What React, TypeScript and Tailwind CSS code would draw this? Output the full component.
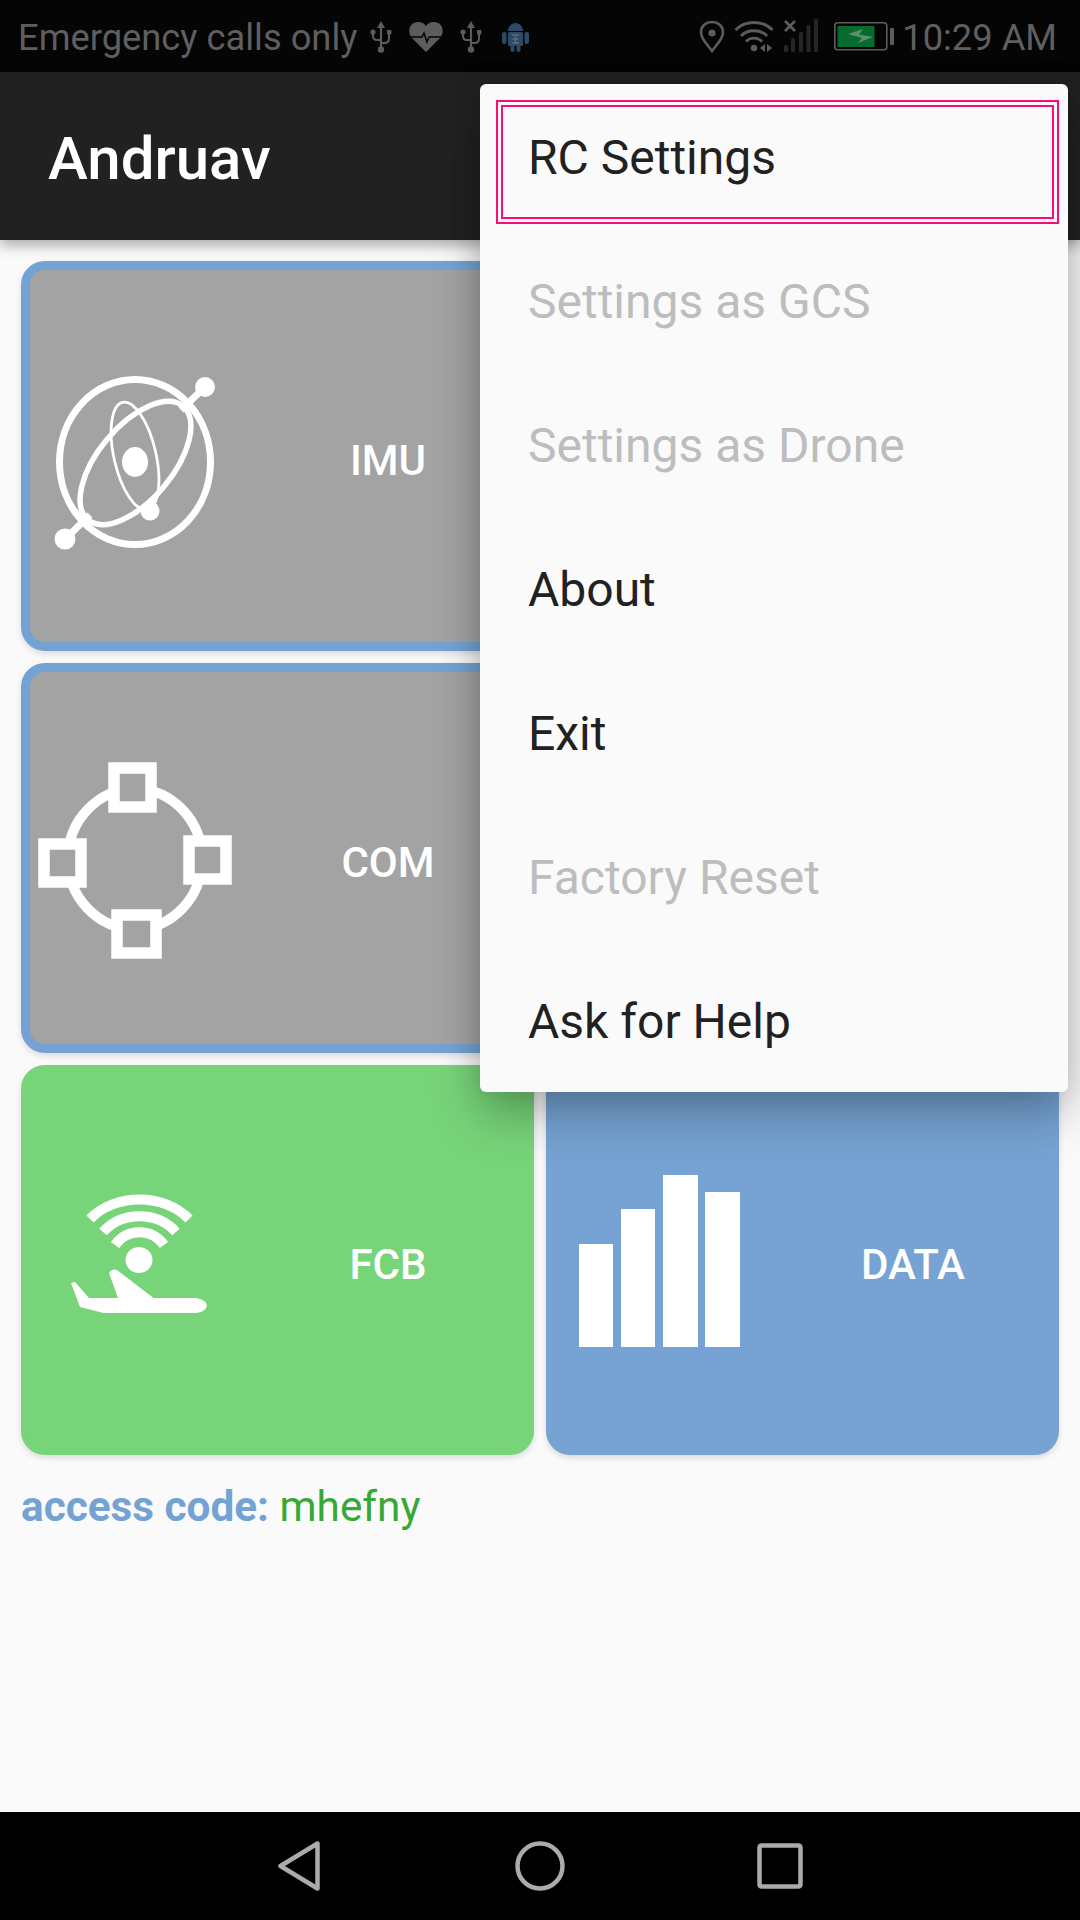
import React from "react";

const Usb = () => (
  <svg width="22" height="33" viewBox="0 0 22 33" fill="none" className="shrink-0">
    <path d="M11 1 L15 8 H7 Z" fill="#5c5c5c" />
    <path d="M11 6 V28" stroke="#5c5c5c" strokeWidth="2.2" />
    <circle cx="11" cy="29.5" r="3.2" fill="#5c5c5c" />
    <path d="M3 13 V16 Q3 20 7 20 H11" stroke="#5c5c5c" strokeWidth="2" />
    <path d="M19 13 V18 Q19 23 15 23 H11" stroke="#5c5c5c" strokeWidth="2" />
    <circle cx="3" cy="12" r="2.6" fill="#5c5c5c" />
    <rect x="17" y="10" width="4.4" height="4.4" fill="#5c5c5c" />
  </svg>
);

const Heart = () => (
  <svg width="34" height="31" viewBox="0 0 34 31" className="shrink-0">
    <path d="M17 31 L3 17 C-2 11 0 2 8 1 C12 .5 15 2 17 5 C19 2 22 .5 26 1 C34 2 36 11 31 17 Z" fill="#5c5c5c" />
    <path d="M2 16 H13 L15 12 L18 21 L20 16 H32" stroke="#050505" strokeWidth="1.6" fill="none" />
  </svg>
);

const Android = () => (
  <svg width="27" height="31" viewBox="0 0 27 31" className="shrink-0">
    <path d="M6 10 C6 5 10 2 13.5 2 C17 2 21 5 21 10 Z" fill="#2c4a68" />
    <rect x="6" y="11" width="15" height="14" rx="1.5" fill="#2c4a68" />
    <rect x="0" y="11" width="4.5" height="12" rx="2.2" fill="#2c4a68" />
    <rect x="22.5" y="11" width="4.5" height="12" rx="2.2" fill="#2c4a68" />
    <rect x="8.5" y="24" width="4" height="7" rx="2" fill="#2c4a68" />
    <rect x="14.5" y="24" width="4" height="7" rx="2" fill="#2c4a68" />
    <path d="M10 14 H17 M13.5 14 V22 M10.5 18 H16.5 M10 22 H17" stroke="#5d6b78" strokeWidth="1.4" />
  </svg>
);

const Pin = () => (
  <svg width="26" height="33" viewBox="0 0 26 33" fill="none" className="shrink-0">
    <path d="M13 31 C8 24 2 19 2 12.5 C2 6 7 2 13 2 C19 2 24 6 24 12.5 C24 19 18 24 13 31 Z" stroke="#5c5c5c" strokeWidth="2.6" />
    <circle cx="13" cy="13" r="3.6" fill="#5c5c5c" />
  </svg>
);

const Wifi = () => (
  <svg width="40" height="32" viewBox="0 0 40 32" fill="none" className="shrink-0">
    <path d="M1.5 10 C11 0 29 0 38.5 10" stroke="#5c5c5c" strokeWidth="2.8" />
    <path d="M7 16 C13 9 27 9 33 16" stroke="#5c5c5c" strokeWidth="2.8" />
    <path d="M12 21.5 C16 17 24 17 28 21.5" stroke="#5c5c5c" strokeWidth="2.8" />
    <circle cx="20" cy="28" r="3.2" fill="#5c5c5c" />
    <path d="M31 24 V32 L26 28 Z M33 24 V32 L38 28 Z" fill="#5c5c5c" />
  </svg>
);

const Signal = () => (
  <svg width="34" height="34" viewBox="0 0 34 34" className="shrink-0">
    <path d="M1 2 L11 12 M11 2 L1 12" stroke="#5c5c5c" strokeWidth="2.8" />
    <rect x="0" y="26" width="4" height="7" rx="1.5" fill="#262626" />
    <rect x="7" y="19" width="4" height="14" rx="1.5" fill="#262626" />
    <rect x="15" y="13" width="4" height="20" rx="1.5" fill="#262626" />
    <rect x="22.5" y="6" width="4" height="27" rx="1.5" fill="#262626" />
    <rect x="30" y="0" width="4" height="33" rx="1.5" fill="#262626" />
  </svg>
);

const Battery = () => (
  <svg width="60" height="29" viewBox="0 0 60 29" fill="none" className="shrink-0">
    <rect x=".8" y=".8" width="52" height="27" rx="3" stroke="#5c5c5c" strokeWidth="1.6" />
    <rect x="3.5" y="4" width="37" height="21" fill="#056b2e" />
    <path d="M14 12 L29 7 L25 12.5 L39 15 L24 21 L28 16 Z" fill="#5f8e6b" />
    <rect x="56" y="6" width="4" height="17" rx="1" fill="#5c5c5c" />
  </svg>
);

const ImuIcon = () => (
  <svg viewBox="0 0 221 372" width="221" height="372" fill="none" className="shrink-0 blur-[0.7px]">
    <ellipse cx="105" cy="192" rx="75.5" ry="82.5" stroke="white" strokeWidth="7" />
    <path d="M175 117 L151 140 M35 269 L60 245" stroke="white" strokeWidth="7" />
    <circle cx="175" cy="117" r="10" fill="white" />
    <circle cx="35" cy="269" r="10.5" fill="white" />
    <ellipse cx="105.5" cy="193" rx="74" ry="37" transform="rotate(-50 105.5 193)" stroke="white" strokeWidth="5.5" />
    <ellipse cx="105" cy="186" rx="21" ry="55" transform="rotate(-13 105 186)" stroke="white" strokeWidth="2.8" />
    <ellipse cx="105" cy="192" rx="13" ry="15" fill="white" />
    <circle cx="120" cy="241" r="9.5" fill="white" />
  </svg>
);

const ComIcon = () => (
  <svg viewBox="0 0 221 372" width="221" height="372" fill="none" className="shrink-0 blur-[0.7px]">
    <ellipse cx="105" cy="187" rx="67" ry="70" stroke="white" strokeWidth="10" />
    <rect x="84" y="96" width="37" height="39" fill="#a3a3a3" stroke="white" strokeWidth="11.5" />
    <rect x="14" y="172" width="37" height="38" fill="#a3a3a3" stroke="white" strokeWidth="11.5" />
    <rect x="159" y="169" width="37" height="38" fill="#a3a3a3" stroke="white" strokeWidth="11.5" />
    <rect x="87" y="243" width="39" height="38" fill="#a3a3a3" stroke="white" strokeWidth="11.5" />
  </svg>
);

const FcbIcon = () => (
  <svg viewBox="0 0 221 372" width="221" height="372" fill="none" className="shrink-0 blur-[0.7px]">
    <path d="M60 145 C85 119 134 119 159 145" stroke="white" strokeWidth="10" />
    <path d="M73 158 C92 137 127 137 146 158" stroke="white" strokeWidth="10" />
    <path d="M85 171 C97 154 122 154 134 171" stroke="white" strokeWidth="10" />
    <ellipse cx="109" cy="186" rx="13.5" ry="13" fill="white" />
    <path d="M41 209 L45 208 L59 224 L88 224 L79 199 Q82 194 87 196 L123.5 224 L166 224 Q177 226 177 232 Q175 238 166 239 L73.5 239 L50 233 Z" fill="white" />
  </svg>
);

const DataIcon = () => (
  <svg viewBox="0 0 221 372" width="221" height="372" className="shrink-0 blur-[0.7px]">
    <rect x="24" y="170" width="34" height="103" fill="white" />
    <rect x="66" y="135" width="34" height="138" fill="white" />
    <rect x="108" y="101" width="35" height="172" fill="white" />
    <rect x="150" y="118" width="35" height="155" fill="white" />
  </svg>
);

const Card = ({ bg, border, icon, label }: { bg: string; border: string; icon?: React.ReactNode; label?: string }) => (
  <div className={`h-[390px] rounded-[24px] border-[9px] flex items-center shadow-[0_3px_6px_rgba(0,0,0,0.12)] ${bg} ${border}`}>
    {icon}
    {label && <div className="flex-1 text-center text-[42px] font-medium leading-[49px] text-white mt-[8px]">{label}</div>}
  </div>
);

const items = [
  { t: "RC Settings", on: true },
  { t: "Settings as GCS", on: false },
  { t: "Settings as Drone", on: false },
  { t: "About", on: true },
  { t: "Exit", on: true },
  { t: "Factory Reset", on: false },
  { t: "Ask for Help", on: true },
];

export default function App() {
  return (
    <div className="relative w-[1080px] h-[1920px] flex flex-col overflow-hidden bg-[#fafafa] font-[Roboto,sans-serif]">
      <div className="h-[72px] shrink-0 bg-[#050505] flex items-center pl-[18px] pr-[23px] text-[36.3px] text-[#5f5f5f]">
        <span className="pt-[4px]">Emergency calls only</span>
        <div className="flex items-center ml-[13px]">
          <Usb />
          <div className="ml-[17px]"><Heart /></div>
          <div className="ml-[17px]"><Usb /></div>
          <div className="ml-[20px]"><Android /></div>
        </div>
        <div className="flex items-center ml-auto">
          <Pin />
          <div className="ml-[9px]"><Wifi /></div>
          <div className="ml-[10px]"><Signal /></div>
          <div className="ml-[16px]"><Battery /></div>
          <span className="ml-[8px] pt-[4px]">10:29 AM</span>
        </div>
      </div>

      <div className="relative z-10 h-[168px] shrink-0 bg-[#212121] flex items-center pl-[48px] pt-[5px] shadow-[0_6px_12px_rgba(0,0,0,0.3)]">
        <span className="text-[60px] font-medium text-white">Andruav</span>
      </div>

      <div className="flex-1 px-[21px] pt-[21px]">
        <div className="grid grid-cols-2 gap-x-[12px] gap-y-[12px]">
          <Card bg="bg-[#a3a3a3]" border="border-[#74a3d3]" icon={<ImuIcon />} label="IMU" />
          <Card bg="bg-[#a3a3a3]" border="border-[#74a3d3]" />
          <Card bg="bg-[#a3a3a3]" border="border-[#74a3d3]" icon={<ComIcon />} label="COM" />
          <Card bg="bg-[#a3a3a3]" border="border-[#74a3d3]" />
          <Card bg="bg-[#77d479]" border="border-[#77d479]" icon={<FcbIcon />} label="FCB" />
          <Card bg="bg-[#76a3d3]" border="border-[#76a3d3]" icon={<DataIcon />} label="DATA" />
        </div>
        <div className="mt-[27px] text-[42.3px] leading-[49px]">
          <span className="font-bold text-[#74a3d3]">access code: </span>
          <span className="text-[#35a835]">mhefny</span>
        </div>
      </div>

      <div className="h-[108px] shrink-0 bg-black flex items-center pl-[278px]">
        <svg width="44" height="50" viewBox="0 0 44 50" fill="none">
          <path d="M39.5 2.5 V47.5 L2.5 25 Z" stroke="#ababab" strokeWidth="4.5" strokeLinejoin="round" />
        </svg>
        <svg width="50" height="50" viewBox="0 0 50 50" fill="none" className="ml-[193px]">
          <circle cx="25" cy="25" r="22.5" stroke="#ababab" strokeWidth="4.5" />
        </svg>
        <svg width="46" height="46" viewBox="0 0 46 46" fill="none" className="ml-[192px]">
          <rect x="2.5" y="2.5" width="41" height="41" rx="2" stroke="#ababab" strokeWidth="4.5" />
        </svg>
      </div>

      <div className="absolute z-20 left-[480px] top-[84px] w-[588px] rounded-[6px] bg-[#fafafa] shadow-[0_24px_48px_rgba(0,0,0,0.25),0_0_30px_rgba(0,0,0,0.12)]">
        {items.map((it) => (
          <div key={it.t} className={`h-[144px] flex items-center pl-[48px] pt-[3px] text-[48px] ${it.on ? "text-[#212121]" : "text-[#bdbdbd]"}`}>
            {it.t}
          </div>
        ))}
        <div className="absolute left-[16px] top-[16px] w-[563px] h-[124px] border-2 border-[#fb0b79] p-[3px]">
          <div className="w-full h-full border-2 border-[#fb0b79]" />
        </div>
      </div>
    </div>
  );
}
